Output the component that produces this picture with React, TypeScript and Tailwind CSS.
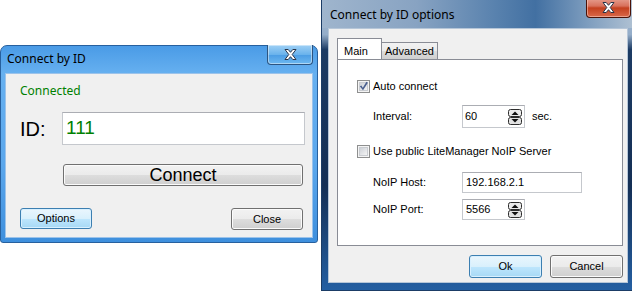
import React from 'react';

const sans = { fontFamily: '"Liberation Sans", Arial, sans-serif' };
const title = { fontFamily: '"Noto Sans", "Liberation Sans", Arial, sans-serif' };

function CloseGlyph() {
    return (
        <svg width="13" height="11" viewBox="0 0 13 11">
            <path
                d="M1 0.5h3.2l2.3 2.8 2.3-2.8h3.2l-3.8 5 3.8 5h-3.2l-2.3-2.8-2.3 2.8h-3.2l3.8-5z"
                fill="#fff"
                stroke="#2b3548"
                strokeWidth="1"
                strokeLinejoin="round"
            />
        </svg>
    );
}

function SpinArrows() {
    return (
        <svg width="14" height="16" viewBox="0 0 14 16">
            <rect x="0.5" y="0.5" width="13" height="7" rx="2" fill="#ececec" stroke="#2d2d2d" />
            <rect x="0.5" y="8.5" width="13" height="7" rx="2" fill="#e2e2e2" stroke="#2d2d2d" />
            <path d="M3.5 6h7l-3.5-3.5z" fill="#111" />
            <path d="M3.5 10h7l-3.5 3.5z" fill="#111" />
        </svg>
    );
}

function CheckBox({ checked }: { checked?: boolean }) {
    return (
        <svg width="13" height="13" viewBox="0 0 13 13" className="shrink-0">
            <defs>
                <linearGradient id="cbg" x1="0" y1="0" x2="1" y2="1">
                    <stop offset="0" stopColor="#cbcfd5" />
                    <stop offset="1" stopColor="#f6f6f6" />
                </linearGradient>
            </defs>
            <rect x="0.5" y="0.5" width="12" height="12" fill="#f4f4f4" stroke="#8e8f8f" />
            <rect x="2.5" y="2.5" width="8" height="8" fill="url(#cbg)" stroke="#c9ccd1" />
            {checked && (
                <path
                    d="M2.8 6.2l1.6-0.6 1.4 2.2 3.6-6 1.5 0.9-4.9 7.6z"
                    fill="#4a5f8f"
                />
            )}
        </svg>
    );
}

function Button({
    label,
    primary,
    className,
}: {
    label: string;
    primary?: boolean;
    className?: string;
}) {
    const skin = primary
        ? 'border-[#3c7fb1] bg-[linear-gradient(180deg,#eaf6fd_0%,#d9f0fc_50%,#bee6fd_51%,#a7d9f5_100%)] shadow-[inset_0_0_0_1px_#d8f0ff]'
        : 'border-[#707070] bg-[linear-gradient(180deg,#f2f2f2_0%,#ebebeb_50%,#dddddd_51%,#cfcfcf_100%)] shadow-[inset_0_0_0_1px_#fbfbfb]';
    return (
        <div
            className={`flex items-center justify-center border rounded-[3px] text-black ${skin} ${className ?? ''}`}
        >
            {label}
        </div>
    );
}

function TextBox({ value, className, spin }: { value: string; className?: string; spin?: boolean }) {
    return (
        <div
            className={`flex items-center justify-between bg-white border border-[#c5c8cd] border-t-[#abadb3] pl-[2px] pr-[2px] ${className ?? ''}`}
        >
            <span>{value}</span>
            {spin && <SpinArrows />}
        </div>
    );
}

function ConnectWindow() {
    return (
        <div className="absolute left-0 top-[45px] w-[318px] h-[198px] flex flex-col px-[4px] pb-[4px] rounded-t-[7px] rounded-b-[3px] border border-[#27609e] bg-[linear-gradient(180deg,#4a9be6_0%,#66b0f0_14%,#5ba7ec_60%,#3e8fdd_100%)]">
            <div className="h-[27px] flex items-start justify-between">
                <div className="pl-[2px] pt-[6px] text-[12px] leading-[14px] text-black" style={title}>
                    Connect by ID
                </div>
                <div className="-mt-px w-[46px] h-[20px] flex items-center justify-center rounded-b-[4px] border border-t-0 border-[#2c5480] bg-[linear-gradient(180deg,#9fd0f5_0%,#6ab3ec_50%,#4a9ce4_51%,#6db8f0_100%)] shadow-[inset_0_0_0_1px_rgba(255,255,255,0.45)]">
                    <CloseGlyph />
                </div>
            </div>
            <div
                className="flex-1 flex flex-col bg-[#f0f0f0] border border-[#9cc3ea] pt-[10px] pl-[14px] pr-[7px] text-[11px]"
                style={sans}
            >
                <div className="h-[14px] leading-[14px] text-[12px] text-[#008000]" style={title}>
                    Connected
                </div>
                <div className="mt-[14px] h-[33px] flex items-center">
                    <div className="w-[42px] text-[20px] text-black">ID:</div>
                    <TextBox
                        value="111"
                        className="flex-1 h-[33px] pl-[3px] text-[19px] text-[#008000]"
                    />
                </div>
                <Button label="Connect" className="mt-[19px] ml-[43px] w-[240px] h-[22px] text-[18px]" />
                <div className="mt-[22px] flex justify-between pr-[2px]">
                    <Button label="Options" primary className="w-[72px] h-[21px]" />
                    <Button label="Close" className="w-[72px] h-[22px]" />
                </div>
            </div>
        </div>
    );
}

function OptionsWindow() {
    return (
        <div className="absolute left-[321px] top-[-8px] w-[316px] h-[299px] flex flex-col pl-[6px] pr-[8px] pb-[7px] border border-[#1b3c66] bg-[linear-gradient(180deg,#a9bdd3_0%,#94adc9_14%,#1c3b64_19%,#142f55_65%,#245fa2_100%)]">
            <div className="h-[35px] flex items-start justify-between -ml-[6px] -mr-[8px] pl-[8px] pr-[5px] bg-[linear-gradient(90deg,#9fb5cd_0%,#88a3c2_30%,#5982ae_55%,#4270a2_68%,#7f9ebf_85%,#b2c3d4_100%)]">
                <div className="pt-[15px] text-[12px] leading-[14px] text-black" style={title}>
                    Connect by ID options
                </div>
                <div className="mt-[4px] w-[45px] h-[21px] flex items-center justify-center rounded-b-[4px] border border-t-0 border-[#4a1208] bg-[linear-gradient(180deg,#e9a89a_0%,#d8715c_45%,#c4401f_55%,#d9694a_100%)] shadow-[inset_0_0_0_1px_rgba(255,220,210,0.5)]">
                    <CloseGlyph />
                </div>
            </div>
            <div className="flex-1 flex flex-col bg-[#f0f0f0] border border-[#b6c6d8] text-[11px] text-black" style={sans}>
                <div className="pl-[8px] pt-[9px] flex items-start">
                    <div className="relative z-10 -mb-px w-[45px] h-[21px] pl-[6px] pt-[4px] bg-white border border-b-0 border-[#898c95]">
                        Main
                    </div>
                    <div className="mt-[4px] w-[56px] h-[17px] flex items-center justify-center border border-l-0 border-b-0 border-[#898c95] bg-[linear-gradient(180deg,#f2f2f2_0%,#ebebeb_50%,#dddddd_51%,#cfcfcf_100%)]">
                        Advanced
                    </div>
                </div>
                <div className="ml-[8px] w-[286px] h-[187px] flex flex-col bg-white border border-[#898c95]">
                    <div className="mt-[20px] pl-[19px] h-[13px] flex items-center gap-[3px]">
                        <CheckBox checked />
                        <span>Auto connect</span>
                    </div>
                    <div className="mt-[12px] pl-[35px] h-[23px] flex items-center">
                        <div className="w-[89px]">Interval:</div>
                        <TextBox value="60" spin className="w-[63px] h-[23px]" />
                        <span className="ml-[7px]">sec.</span>
                    </div>
                    <div className="mt-[17px] pl-[19px] h-[13px] flex items-center gap-[3px]">
                        <CheckBox />
                        <span>Use public LiteManager NoIP Server</span>
                    </div>
                    <div className="mt-[14px] pl-[35px] h-[21px] flex items-center">
                        <div className="w-[89px]">NoIP Host:</div>
                        <TextBox value="192.168.2.1" className="w-[120px] h-[21px] pl-[3px]" />
                    </div>
                    <div className="mt-[6px] pl-[35px] h-[21px] flex items-center">
                        <div className="w-[89px]">NoIP Port:</div>
                        <TextBox value="5566" spin className="w-[63px] h-[21px] pl-[3px]" />
                    </div>
                </div>
                <div className="mt-[9px] flex justify-end gap-[8px] pr-[4px]">
                    <Button label="Ok" primary className="w-[73px] h-[23px]" />
                    <Button label="Cancel" className="w-[73px] h-[23px]" />
                </div>
            </div>
        </div>
    );
}

export default function App() {
    return (
        <div className="relative w-[632px] h-[291px] overflow-hidden bg-white">
            <ConnectWindow />
            <OptionsWindow />
        </div>
    );
}
